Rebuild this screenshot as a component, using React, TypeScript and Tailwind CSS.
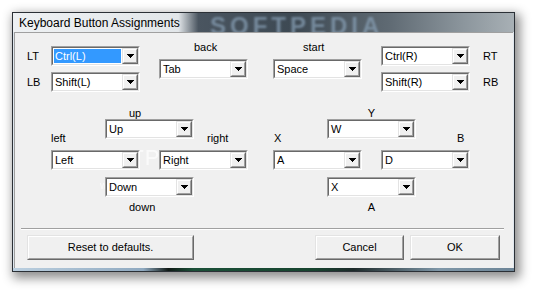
import React from "react";

interface ComboProps {
    value: string;
    selected?: boolean;
}

const DropButton: React.FC = () => (
    <div className="h-full w-[16px] shrink-0 border border-t-[#e3e3e3] border-l-[#e3e3e3] border-r-[#696969] border-b-[#696969]">
        <div className="flex h-full w-full items-center justify-center border border-t-white border-l-white border-r-[#a0a0a0] border-b-[#a0a0a0] bg-[#f0f0f0]">
            <svg width="7" height="4" viewBox="0 0 7 4" shapeRendering="crispEdges">
                <path d="M0 0h7v1H0zM1 1h5v1H1zM2 2h3v1H2zM3 3h1v1H3z" fill="#000" />
            </svg>
        </div>
    </div>
);

const Combo: React.FC<ComboProps> = ({ value, selected }) => (
    <div className="h-[20px] w-[89px] shrink-0 border border-t-[#a0a0a0] border-l-[#a0a0a0] border-r-white border-b-white">
        <div className="flex h-full w-full border border-t-[#696969] border-l-[#696969] border-r-[#e3e3e3] border-b-[#e3e3e3] bg-white">
            <div className="flex flex-1 items-center p-[1px]">
                <span
                    className={
                        selected
                            ? "flex h-full w-full items-center bg-[#3399ff] px-[1px] text-white"
                            : "px-[1px] text-black"
                    }
                >
                    {value}
                </span>
            </div>
            <DropButton />
        </div>
    </div>
);

interface ClusterProps {
    top: string;
    left: string;
    right: string;
    bottom: string;
    up: string;
    west: string;
    east: string;
    down: string;
    topClass: string;
    leftClass: string;
    rightClass: string;
}

const Cluster: React.FC<ClusterProps> = (p) => (
    <div className="flex w-[197px] flex-col">
        <div className="flex h-[12px]">
            <div className="w-[54px]" />
            <div className={`w-[89px] leading-[12px] ${p.topClass}`}>{p.top}</div>
        </div>
        <div className="flex h-[25px]">
            <div className={`flex w-[54px] items-end leading-[12px] ${p.leftClass}`}>{p.left}</div>
            <Combo value={p.up} />
            <div className={`flex w-[54px] items-end leading-[12px] ${p.rightClass}`}>{p.right}</div>
        </div>
        <div className="mt-[6px] flex gap-[19px]">
            <Combo value={p.west} />
            <Combo value={p.east} />
        </div>
        <div className="mt-[7px] flex pl-[54px]">
            <Combo value={p.down} />
        </div>
        <div className="mt-[4px] flex h-[12px]">
            <div className="w-[54px]" />
            <div className={`w-[89px] leading-[12px] ${p.topClass}`}>{p.bottom}</div>
        </div>
    </div>
);

const DialogButton: React.FC<{ label: string; width: string }> = ({ label, width }) => (
    <div className={`h-[25px] ${width} border border-t-[#e3e3e3] border-l-[#e3e3e3] border-r-[#696969] border-b-[#696969]`}>
        <div className="flex h-full w-full items-center justify-center border border-t-white border-l-white border-r-[#a0a0a0] border-b-[#a0a0a0] bg-[#f0f0f0]">
            {label}
        </div>
    </div>
);

const App: React.FC = () => {
    return (
        <div className="h-[292px] w-[536px] overflow-hidden bg-white pl-[12px] pt-[12px] font-['Liberation_Sans',Arial,sans-serif] text-[11px] text-black">
            <div className="flex h-[260px] w-[503px] flex-col border border-[#2b3036] shadow-[3px_4px_10px_2px_rgba(0,0,0,0.45)]">
                {/* title bar */}
                <div className="relative flex h-[19px] shrink-0 items-center overflow-hidden bg-[linear-gradient(to_right,#eef1f3_0%,#e2e6e9_33%,#4a5560_37%,#3d4953_56%,#5f6a73_75%,#8c969d_90%,#a8b0b5_100%)] pl-[6px] text-[12px]">
                    <span className="relative z-10">Keyboard Button Assignments</span>
                    <span className="pointer-events-none absolute left-[197px] top-[1px] text-[24px] font-bold leading-[24px] tracking-[4px] text-[#8aa2b8] opacity-70 blur-[1px]">
                        SOFTPEDIA
                    </span>
                </div>

                <div className="flex min-h-0 flex-1">
                    <div className="w-[1px] bg-[#dfe7ee]" />
                    <div className="relative flex w-[499px] flex-col border-l border-t border-[#a0a0a0] bg-[#f0f0f0]">
                        {/* watermark, drawn under the controls */}
                        <div className="pointer-events-none absolute left-[67px] top-[114px] flex flex-col items-start text-white opacity-70">
                            <span className="text-[22px] leading-[22px] tracking-[1px]">
                                SOFTPEDIA<sup className="text-[8px]">™</sup>
                            </span>
                            <span className="ml-[18px] mt-[12px] text-[10px] leading-[10px]">www.softpedia.com</span>
                        </div>

                        {/* shoulder and menu buttons */}
                        <div className="relative flex pt-[8px]">
                            <div className="ml-[12px] flex w-[24px] flex-col gap-[6px] pt-[5px]">
                                <div className="flex h-[20px] items-center">LT</div>
                                <div className="flex h-[20px] items-center">LB</div>
                            </div>
                            <div className="flex flex-col gap-[6px] pt-[5px]">
                                <Combo value="Ctrl(L)" selected />
                                <Combo value="Shift(L)" />
                            </div>
                            <div className="ml-[19px] flex flex-col">
                                <span className="ml-[35px] h-[12px] leading-[12px]">back</span>
                                <div className="mt-[6px]">
                                    <Combo value="Tab" />
                                </div>
                            </div>
                            <div className="ml-[25px] flex flex-col">
                                <span className="ml-[30px] h-[12px] leading-[12px]">start</span>
                                <div className="mt-[6px]">
                                    <Combo value="Space" />
                                </div>
                            </div>
                            <div className="ml-[19px] flex flex-col gap-[6px] pt-[5px]">
                                <Combo value="Ctrl(R)" />
                                <Combo value="Shift(R)" />
                            </div>
                            <div className="ml-[13px] flex flex-col gap-[6px] pt-[5px]">
                                <div className="flex h-[20px] items-center">RT</div>
                                <div className="flex h-[20px] items-center">RB</div>
                            </div>
                        </div>

                        {/* d-pad and face buttons */}
                        <div className="relative ml-[36px] mt-[15px] flex gap-[25px]">
                            <Cluster
                                top="up"
                                left="left"
                                right="right"
                                bottom="down"
                                up="Up"
                                west="Left"
                                east="Right"
                                down="Down"
                                topClass="pl-[24px]"
                                leftClass=""
                                rightClass="pl-[13px]"
                            />
                            <Cluster
                                top="Y"
                                left="X"
                                right="B"
                                bottom="A"
                                up="W"
                                west="A"
                                east="D"
                                down="X"
                                topClass="text-center"
                                leftClass="pl-[1px]"
                                rightClass="pl-[41px]"
                            />
                        </div>

                        <div className="ml-[6px] mt-[15px] h-[2px] w-[483px] border-t border-b border-t-[#a0a0a0] border-b-white" />

                        <div className="mt-[5px] flex">
                            <div className="ml-[12px]">
                                <DialogButton label="Reset to defaults." width="w-[167px]" />
                            </div>
                            <div className="ml-[121px]">
                                <DialogButton label="Cancel" width="w-[89px]" />
                            </div>
                            <div className="ml-[6px]">
                                <DialogButton label="OK" width="w-[90px]" />
                            </div>
                        </div>
                    </div>
                    <div className="w-[1px] bg-[#dfe7ee]" />
                </div>

                <div className="h-[3px] shrink-0 bg-[linear-gradient(to_right,#bcd0e0_0%,#8fa9c0_26%,#101a16_31%,#1b5038_36%,#17442f_60%,#1d2a2a_68%,#7f97a8_85%,#6d8597_100%)]" />
            </div>
        </div>
    );
};

export default App;
